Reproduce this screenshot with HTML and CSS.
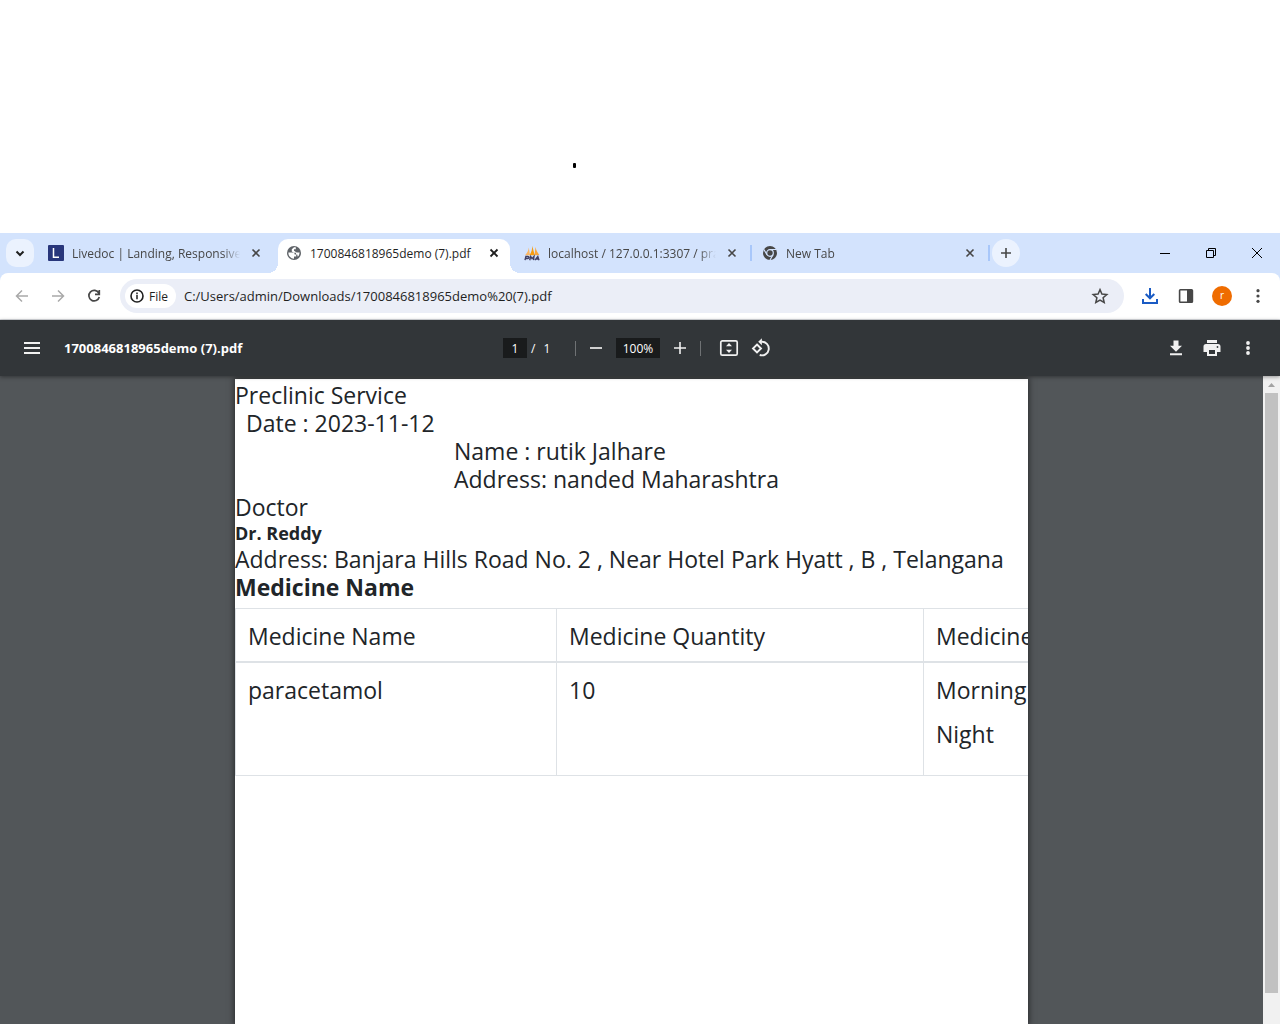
FILE: index.html
```html
<!DOCTYPE html>
<html lang="en">
<head>
<meta charset="utf-8">
<title>1700846818965demo (7).pdf</title>
<link rel="stylesheet" href="styles.css">
</head>
<body>
<div class="top-space"><span class="dot"></span></div>
<div class="browser">
  <header class="tab-strip">
    <button class="soft-button tab-search" aria-label="Search tabs"><svg width="16" height="16" viewBox="0 0 16 16"><path d="M4.500 6.500 8 10l3.500-3.500" fill="none" stroke="#1f1f1f" stroke-width="2"/></svg></button>
    <div class="tab">
      <svg class="favicon" viewBox="0 0 16 16"><rect width="16" height="16" rx="1" fill="#28367b"/><path d="M5.500 3v9.300h5.500" fill="none" stroke="#fff" stroke-width="1.500"/></svg>
      <span class="tab-title">Livedoc | Landing, Responsive and Admin</span>
      <button class="tab-close" aria-label="Close tab"><svg width="16" height="16" viewBox="0 0 16 16"><path d="m4.500 4.500 7 7m0-7-7 7" stroke="#474747" stroke-width="1.600"/></svg></button>
    </div>
    <div class="tab tab-active">
      <svg class="favicon" viewBox="0 0 16 16"><circle cx="8" cy="8" r="7" fill="#5f6368"/><path d="M2.400 7.500h4c1.800 0 2.300.8 2.300 2.100h1.500v1.900H8v2.200a5.700 5.700 0 0 1-5.600-6.200zM8 2.300h1.800v1.900H8v1.600c1.400.3 1.600 1.700 3 1.700h2.600a5.700 5.700 0 0 1-1.800 4.200l-.6-2.200H10V7.800H7.900L5.800 6.500V4.300z" fill="#fff"/></svg>
      <span class="tab-title">1700846818965demo (7).pdf</span>
      <button class="tab-close" aria-label="Close tab"><svg width="16" height="16" viewBox="0 0 16 16"><path d="m4.500 4.500 7 7m0-7-7 7" stroke="#1f1f1f" stroke-width="1.800"/></svg></button>
    </div>
    <div class="tab">
      <svg class="favicon" viewBox="0 0 16 16"><path d="M1 10.200C3.200 8 4.500 5.500 4.800 2.500l1.200 7.700z" fill="#fbb663"/><path d="M5.500 10.200C7.700 7 8.300 4 8.200.8l2.500 9.400z" fill="#f89c0e"/><path d="M10.500 10.200 11.500 2c.6 3 1.900 5.400 3.800 7.900z" fill="#f9a63a"/><path d="M1 15.200 1.900 11.500h2c1.500 0 1.300 2-.3 2H1.700M5.700 15.200l1-3.700 1.300 2.200 2-2.200-.5 3.700M11 15.200l2.800-3.700 1.200 3.700m-2.800-1.200h2.200" fill="none" stroke="#414064" stroke-width="1.400"/></svg>
      <span class="tab-title">localhost / 127.0.0.1:3307 / practice</span>
      <button class="tab-close" aria-label="Close tab"><svg width="16" height="16" viewBox="0 0 16 16"><path d="m4.500 4.500 7 7m0-7-7 7" stroke="#474747" stroke-width="1.600"/></svg></button>
    </div>
    <span class="tab-divider"></span>
    <div class="tab">
      <svg class="favicon" viewBox="0 0 16 16"><circle cx="8" cy="8" r="7" fill="#474747"/><circle cx="8" cy="8" r="3.300" fill="none" stroke="#d3e3fd" stroke-width="1.200"/><path d="M8 4.500h6.300M5 9.700 1.900 4.500M11 9.800 8 15" fill="none" stroke="#d3e3fd" stroke-width="1.200"/></svg>
      <span class="tab-title">New Tab</span>
      <button class="tab-close" aria-label="Close tab"><svg width="16" height="16" viewBox="0 0 16 16"><path d="m4.500 4.500 7 7m0-7-7 7" stroke="#474747" stroke-width="1.600"/></svg></button>
    </div>
    <span class="tab-divider"></span>
    <button class="soft-button new-tab" aria-label="New tab"><svg width="16" height="16" viewBox="0 0 16 16"><path d="M8 3v10M3 8h10" stroke="#474747" stroke-width="1.600"/></svg></button>
    <div class="window-controls">
      <button aria-label="Minimize"><svg width="12" height="12" viewBox="0 0 12 12"><path d="M1 6.500h10" stroke="#000"/></svg></button>
      <button aria-label="Restore"><svg width="12" height="12" viewBox="0 0 12 12"><path d="M1.500 3.500h7v7h-7zM3.500 3.500v-2h7v7h-2" fill="none" stroke="#000"/></svg></button>
      <button aria-label="Close window"><svg width="12" height="12" viewBox="0 0 12 12"><path d="m1 1 10 10M11 1 1 11" stroke="#000"/></svg></button>
    </div>
  </header>

  <nav class="toolbar">
    <div class="button-row">
      <button class="icon-button" aria-label="Back"><svg width="16" height="16" viewBox="0 0 16 16"><path d="M14 8H3M8 2.500 2.500 8 8 13.500" fill="none" stroke="#a9a9a9" stroke-width="1.500"/></svg></button>
      <button class="icon-button" aria-label="Forward"><svg width="16" height="16" viewBox="0 0 16 16"><path d="M2 8h11M8 2.500 13.500 8 8 13.500" fill="none" stroke="#a9a9a9" stroke-width="1.500"/></svg></button>
      <button class="icon-button" aria-label="Reload"><svg width="16" height="16" viewBox="0 0 16 16"><path d="M12.800 5A5.300 5.300 0 1 0 13.300 9M13.300 2v4.300H9" fill="none" stroke="#474747" stroke-width="1.700"/></svg></button>
    </div>
    <div class="omnibox">
      <button class="file-chip"><svg width="14" height="14" viewBox="0 0 14 14"><circle cx="7" cy="7" r="6" fill="none" stroke="#1f1f1f" stroke-width="1.600"/><path d="M7 6v4.300M7 3.600v1.600" stroke="#1f1f1f" stroke-width="1.500"/></svg>File</button>
      <input class="address" aria-label="Address" value="C:/Users/admin/Downloads/1700846818965demo%20(7).pdf">
      <button class="icon-button" aria-label="Bookmark"><svg width="18" height="18" viewBox="0 0 18 18"><path d="m9 2.600 1.900 4.500 4.900.4-3.700 3.200 1.100 4.800L9 13l-4.200 2.500 1.100-4.800-3.700-3.200 4.900-.4z" fill="none" stroke="#474747" stroke-width="1.500"/></svg></button>
    </div>
    <div class="button-row">
      <button class="icon-button" aria-label="Downloads"><svg width="18" height="18" viewBox="0 0 18 18"><path d="M9 1v10M4.700 7 9 11.300 13.300 7M2 12v4h14v-4" fill="none" stroke="#1a5bc4" stroke-width="2"/></svg></button>
      <button class="icon-button" aria-label="Side panel"><svg width="16" height="16" viewBox="0 0 16 16"><rect x="1.600" y="1.800" width="12.800" height="12.400" rx=".8" fill="none" stroke="#474747" stroke-width="1.600"/><path d="M9 2h5v12H9z" fill="#474747"/></svg></button>
      <button class="icon-button" aria-label="Profile"><span class="avatar">r</span></button>
      <button class="icon-button" aria-label="Menu"><svg width="16" height="16" viewBox="0 0 16 16" fill="#474747"><circle cx="8" cy="2.700" r="1.600"/><circle cx="8" cy="8" r="1.600"/><circle cx="8" cy="13.300" r="1.600"/></svg></button>
    </div>
  </nav>

  <section class="pdf-bar">
    <div class="pdf-name">
      <button class="pdf-button" aria-label="Sidebar"><svg width="16" height="14" viewBox="0 0 16 14"><path d="M0 2h16M0 7h16M0 12h16" stroke="#f1f1f1" stroke-width="2"/></svg></button>
      <h1>1700846818965demo (7).pdf</h1>
    </div>
    <div class="pdf-center">
      <input class="pdf-input page-input" aria-label="Page" value="1">
      <span class="page-total"><span>/</span><span>1</span></span>
      <span class="pdf-divider"></span>
      <button class="pdf-button" aria-label="Zoom out"><svg width="12" height="12" viewBox="0 0 12 12"><path d="M0 6h12" stroke="#d0d0d0" stroke-width="2"/></svg></button>
      <input class="pdf-input zoom-input" aria-label="Zoom" value="100%">
      <button class="pdf-button" aria-label="Zoom in"><svg width="12" height="12" viewBox="0 0 12 12"><path d="M0 6h12M6 0v12" stroke="#f1f1f1" stroke-width="1.600"/></svg></button>
      <span class="pdf-divider"></span>
      <div class="fit-group">
        <button class="pdf-button" aria-label="Fit to page"><svg width="20" height="20" viewBox="0 0 20 20"><rect x="1.800" y="2.800" width="16.400" height="14.400" rx="1.500" fill="none" stroke="#f1f1f1" stroke-width="1.700"/><path d="m10 5 3 3.200H7zM10 15l3-3.200H7z" fill="#f1f1f1"/></svg></button>
        <button class="pdf-button" aria-label="Rotate"><svg width="20" height="20" viewBox="0 0 20 20"><path d="m6 6.500 4 4-4 4-4-4z" fill="none" stroke="#f1f1f1" stroke-width="1.900"/><path d="M10.500 3.800a6.800 6.800 0 1 1-1.800 13.200" fill="none" stroke="#f1f1f1" stroke-width="1.900"/><path d="M10.900.2v7L7.200 3.700z" fill="#f1f1f1"/></svg></button>
      </div>
    </div>
    <div class="pdf-actions">
      <button class="pdf-button" aria-label="Download"><svg width="16" height="16" viewBox="0 0 16 16" fill="#f1f1f1"><path d="M5.500.5h5v5.300H14l-6 6-6-6h3.500zM2 13.300h12v2H2z"/></svg></button>
      <button class="pdf-button" aria-label="Print"><svg width="18" height="16" viewBox="0 0 18 16"><path d="M4 0h10v3H4zM3 4h12c1.600 0 2.500 1 2.500 2.500V12H14v4H4v-4H.5V6.500C.5 5 1.400 4 3 4z" fill="#f1f1f1"/><path d="M6 10h6v4H6z" fill="#323639"/><circle cx="14.500" cy="7" r=".9" fill="#323639"/></svg></button>
      <button class="pdf-button" aria-label="More"><svg width="16" height="16" viewBox="0 0 16 16" fill="#f1f1f1"><circle cx="8" cy="3" r="1.900"/><circle cx="8" cy="8" r="1.900"/><circle cx="8" cy="13" r="1.900"/></svg></button>
    </div>
  </section>

  <main class="viewer">
    <div class="canvas">
      <article class="page">
        <p>Preclinic Service</p>
        <p class="date">Date : 2023-11-12</p>
        <div class="patient">
          <p>Name : rutik Jalhare</p>
          <p>Address: nanded Maharashtra</p>
        </div>
        <p>Doctor</p>
        <h3>Dr. Reddy</h3>
        <p>Address: Banjara Hills Road No. 2 , Near Hotel Park Hyatt , B , Telangana</p>
        <h2>Medicine Name</h2>
        <table>
          <colgroup><col class="col-name"><col class="col-quantity"><col class="col-time"></colgroup>
          <thead><tr><th>Medicine Name</th><th>Medicine Quantity</th><th>Medicine</th></tr></thead>
          <tbody><tr><td>paracetamol</td><td>10</td><td><p>Morning</p><p>Night</p></td></tr></tbody>
        </table>
      </article>
    </div>
    <div class="scrollbar">
      <svg width="17" height="17" viewBox="0 0 17 17"><path d="M5 11h7L8.500 7z" fill="#a3a3a3"/></svg>
      <div class="thumb"></div>
    </div>
  </main>
</div>
</body>
</html>
```

FILE: styles.css
```css
* { box-sizing: border-box; }
body {
  margin: 0;
  min-height: 100vh;
  display: flex;
  flex-direction: column;
  background: #fff;
  color: #212529;
  font-family: "Segoe UI", "Open Sans", sans-serif;
  font-size: 12px;
}
p, h1, h2, h3 { margin: 0; }
button, input { font: inherit; color: inherit; border: 0; padding: 0; margin: 0; background: none; }
button { display: flex; align-items: center; justify-content: center; flex: none; }
svg { display: block; flex: none; }

.top-space { height: 233px; padding: 163px 0 0 573px; }
.dot { display: block; width: 3px; height: 5px; border-radius: 1px; background: #000; }
.browser { flex: 1; display: flex; flex-direction: column; }

.tab-strip { height: 40px; display: flex; align-items: center; background: #d3e3fd; }
.soft-button { width: 28px; height: 28px; background: #ebf2fe; }
.tab-search { margin: 0 6px; border-radius: 10px; }
.new-tab { border-radius: 50%; }
.tab {
  position: relative;
  flex: 0 1 232px;
  min-width: 0;
  height: 34px;
  margin-right: 6px;
  padding: 0 8px 6px;
  align-self: flex-end;
  display: flex;
  align-items: center;
  gap: 8px;
  color: #474747;
}
.favicon { width: 16px; height: 16px; }
.tab-title {
  flex: 1;
  overflow: hidden;
  white-space: nowrap;
  font-weight: 500;
  mask-image: linear-gradient(to right, #000 90%, transparent);
}
.tab-active { background: #fff; border-radius: 10px 10px 0 0; color: #1f1f1f; }
.tab-active::before, .tab-active::after {
  content: "";
  position: absolute;
  bottom: 0;
  width: 10px;
  height: 10px;
}
.tab-active::before { left: -10px; background: radial-gradient(circle at 0 0, transparent 10px, #fff 10px); }
.tab-active::after { right: -10px; background: radial-gradient(circle at 100% 0, transparent 10px, #fff 10px); }
.tab-active .tab-title { mask-image: none; }
.tab-divider { width: 2px; height: 16px; margin: 0 2px 0 -4px; background: #a8c7fa; }
.window-controls { display: flex; margin-left: auto; }
.window-controls button { width: 46px; height: 40px; }

.toolbar {
  height: 47px;
  padding: 0 8px;
  display: flex;
  align-items: center;
  gap: 12px;
  background: linear-gradient(#d3e3fd, #d3e3fd) top / 100% 10px no-repeat;
  border-bottom: 1px solid #dadce0;
  position: relative;
  z-index: 0;
}
.toolbar::before {
  content: "";
  position: absolute;
  inset: 0;
  z-index: -1;
  background: #fff;
  border-radius: 8px 8px 0 0;
}
.button-row { display: flex; gap: 8px; }
.icon-button { width: 28px; height: 28px; }
.omnibox {
  flex: 1;
  height: 34px;
  padding: 0 10px 0 5px;
  display: flex;
  align-items: center;
  gap: 8px;
  border-radius: 17px;
  background: #ebeef7;
}
.file-chip { height: 24px; padding: 0 8px 0 5px; gap: 5px; border-radius: 12px; background: #fff; color: #1f1f1f; font-weight: 500; }
.address { flex: 1; min-width: 0; font-size: 13px; color: #1f1f1f; }
.avatar { width: 20px; height: 20px; border-radius: 50%; background: #ef6c00; color: #fff; font-size: 10px; line-height: 19px; text-align: center; }

.pdf-bar {
  position: relative;
  z-index: 1;
  height: 56px;
  padding: 0 16px;
  display: grid;
  grid-template-columns: 1fr auto 1fr;
  align-items: center;
  background: #323639;
  color: #fff;
  box-shadow: 0 1px 4px rgba(0, 0, 0, .4);
}
.pdf-name, .pdf-center, .pdf-actions, .fit-group { display: flex; align-items: center; }
.pdf-name { gap: 16px; }
.pdf-name h1 { font-size: 13px; font-weight: 700; white-space: nowrap; }
.pdf-button { width: 32px; height: 32px; }
.pdf-center { gap: 4px; }
.pdf-input { height: 20px; background: #191b1c; color: #fff; text-align: center; }
.page-input { width: 24px; }
.zoom-input { width: 44px; }
.page-total { width: 40px; display: flex; gap: 8px; }
.pdf-divider { width: 1px; height: 15px; background: #6f7274; }
.fit-group { margin-left: 8px; }
.pdf-actions { justify-content: flex-end; gap: 4px; }

.viewer { flex: 1; display: flex; background: #525659; }
.canvas { flex: 1; display: flex; justify-content: center; padding-top: 3px; overflow: hidden; }
.page {
  width: 793px;
  padding-top: 2px;
  overflow: hidden;
  background: #fff;
  box-shadow: 0 0 6px 1px rgba(0, 0, 0, .5);
  font-size: 23px;
  line-height: 28px;
  white-space: nowrap;
}
.date { padding-left: 11px; }
.patient { padding-left: 219px; }
.page h3 { font-size: 18px; line-height: 24px; }
.page h2 { font-size: 23px; line-height: 28px; }
table { width: 920px; margin-top: 7px; table-layout: fixed; border-collapse: collapse; }
.col-name { width: 321px; }
.col-quantity { width: 367px; }
th, td { padding: 13px 12px 11px; border: 1px solid #dee2e6; text-align: left; vertical-align: top; font-weight: 400; }
th { border-bottom-width: 2px; }
td p { margin-bottom: 16px; }

.scrollbar { width: 17px; padding-right: 2px; background: #f1f1f1; }
.thumb { width: 13px; height: 600px; margin-left: 2px; background: #c1c1c1; }
```
